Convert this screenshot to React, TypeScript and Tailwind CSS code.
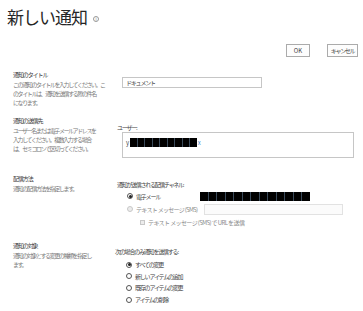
import { ReactNode } from 'react';

const font = { fontFamily: '"Noto Sans CJK JP", "Noto Sans", sans-serif' };

function Redacted({ count, seg = 7 }: { count: number; seg?: number }) {
  return (
    <span className="inline-flex h-[9px] gap-[1px] bg-[#3a4a5a]">
      {Array.from({ length: count }).map((_, i) => (
        <span key={i} className="h-full bg-black" style={{ width: seg }} />
      ))}
    </span>
  );
}

function Radio({ checked, disabled }: { checked?: boolean; disabled?: boolean }) {
  return (
    <span
      className={`flex h-[6px] w-[6px] shrink-0 items-center justify-center rounded-full border ${
        disabled ? 'border-[#c8c8c8] bg-[#ececec]' : 'border-[#555] bg-white'
      }`}
    >
      {checked && <span className="h-[3px] w-[3px] rounded-full bg-[#222]" />}
    </span>
  );
}

function Section({
  title,
  desc,
  className,
  children,
}: {
  title: string;
  desc: ReactNode;
  className?: string;
  children: ReactNode;
}) {
  return (
    <div className={`flex ${className ?? ''}`}>
      <div className="w-[104px] shrink-0 pl-[13px]">
        <div className="whitespace-nowrap text-[6px] leading-[9px] tracking-[-1.1px] text-[#3a3a3a]">{title}</div>
        <div className="mt-[1px] whitespace-nowrap text-[6px] leading-[9px] tracking-[-1.4px] text-[#7a7a7a]">
          {desc}
        </div>
      </div>
      <div className="flex-1 whitespace-nowrap">{children}</div>
    </div>
  );
}

export default function App() {
  return (
    <div className="relative h-[311px] w-[363px] overflow-hidden bg-white" style={font}>
      <div className="flex items-center pl-[7px] pt-[6px]">
        <h1 className="text-[17px] leading-[22px] tracking-[-1px] text-[#262626]">新しい通知</h1>
        <span className="ml-[6px] mt-[3px] flex h-[6px] w-[6px] items-center justify-center rounded-full border border-[#999] text-[4px] leading-none text-[#777]">
          i
        </span>
      </div>

      <div className="mt-[16px] flex justify-end gap-[17px] pr-[5px]">
        <button className="h-[13px] w-[24px] border border-[#ababab] bg-[#fdfdfd] text-[6px] leading-none text-[#444]">
          OK
        </button>
        <button className="h-[13px] w-[31px] whitespace-nowrap border border-[#ababab] bg-[#fdfdfd] text-[6px] leading-none tracking-[-1.3px] text-[#444]">
          キャンセル
        </button>
      </div>

      <Section
        className="mt-[13px]"
        title="通知のタイトル"
        desc={
          <>
            この通知のタイトルを入力してください。こ
            <br />
            のタイトルは、通知を送信する際の件名
            <br />
            になります。
          </>
        }
      >
        <div className="ml-[18px] mt-[7px] flex h-[11px] w-[140px] items-center border border-[#c6c6c6] px-[3px] text-[6px] tracking-[-1.2px] text-[#444]">
          ドキュメント
        </div>
      </Section>

      <Section
        className="mt-[9px]"
        title="通知の送信先"
        desc={
          <>
            ユーザー名または電子メール アドレスを
            <br />
            入力してください。複数入力する場合
            <br />
            は、セミコロンで区切ってください。
          </>
        }
      >
        <div className="ml-[13px] mt-[8px] text-[6px] leading-[8px] tracking-[-1.2px] text-[#444]">ユーザー:</div>
        <div className="ml-[18px] h-[26px] w-[232px] border border-[#c6c6c6] px-[3px] pt-[5px]">
          <div className="flex items-center text-[6px] leading-[9px] text-[#444]">
            <span className="mr-[1px]">y</span>
            <Redacted count={9} seg={6.5} />
            <span className="ml-[1px] text-[#3a86c8]">x</span>
          </div>
        </div>
      </Section>

      <Section className="mt-[16px]" title="配信方法" desc="通知の配信方法を指定します。">
        <div className="ml-[13px] mt-[6px] text-[6px] leading-[9px] tracking-[-1.3px] text-[#444]">
          通知が送信される配信チャネル:
        </div>
        <div className="ml-[23px] mt-[2px] flex h-[10px] items-center text-[6px] tracking-[-1.2px] text-[#444]">
          <Radio checked />
          <span className="ml-[3px] w-[64px]">電子メール</span>
          <Redacted count={13} seg={7.5} />
        </div>
        <div className="ml-[23px] mt-[2px] flex h-[12px] items-center text-[6px] tracking-[-0.7px] text-[#8a8a8a]">
          <Radio disabled />
          <span className="ml-[3px] w-[68px]">テキスト メッセージ (SMS)</span>
          <span className="h-[11px] w-[139px] border border-[#e2e2e2] bg-[#fbfbfb]" />
        </div>
        <div className="ml-[36px] mt-[3px] flex h-[9px] items-center text-[6px] tracking-[-0.6px] text-[#8a8a8a]">
          <span className="h-[5px] w-[5px] border border-[#c8c8c8] bg-[#ececec]" />
          <span className="ml-[3px]">テキスト メッセージ (SMS) で URL を送信</span>
        </div>
      </Section>

      <Section
        className="mt-[14px]"
        title="通知の対象"
        desc={
          <>
            通知の対象とする変更の種類を指定し
            <br />
            ます。
          </>
        }
      >
        <div className="ml-[11px] mt-[6px] text-[6px] leading-[9px] tracking-[-1.2px] text-[#444]">
          次の場合のみ通知を送信する:
        </div>
        <div className="ml-[22px] mt-[4px] flex flex-col gap-[2.7px] text-[6px] tracking-[-1.2px] text-[#444]">
          {['すべての変更', '新しいアイテムの追加', '既存のアイテムの変更', 'アイテムの削除'].map((label, i) => (
            <div key={label} className="flex h-[9px] items-center">
              <Radio checked={i === 0} />
              <span className="ml-[3px]">{label}</span>
            </div>
          ))}
        </div>
      </Section>
    </div>
  );
}
